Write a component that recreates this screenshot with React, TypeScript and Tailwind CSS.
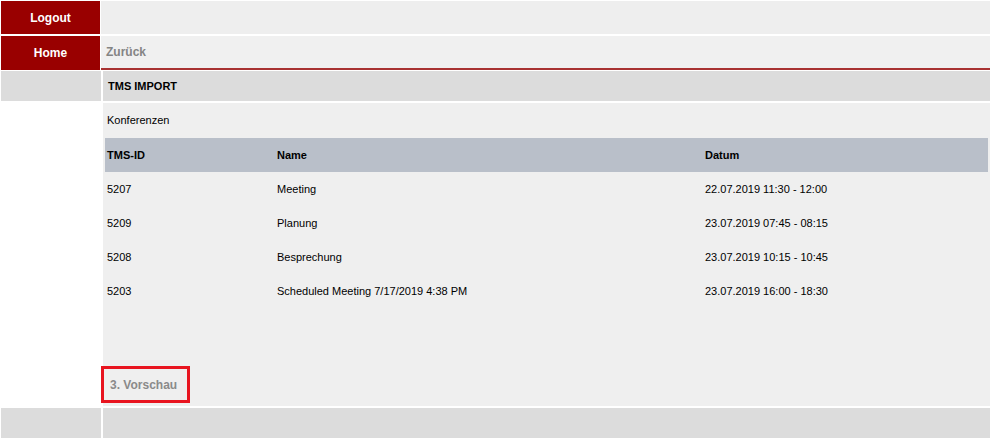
const rows = [
  { id: "5207", name: "Meeting", date: "22.07.2019 11:30 - 12:00" },
  { id: "5209", name: "Planung", date: "23.07.2019 07:45 - 08:15" },
  { id: "5208", name: "Besprechung", date: "23.07.2019 10:15 - 10:45" },
  { id: "5203", name: "Scheduled Meeting 7/17/2019 4:38 PM", date: "23.07.2019 16:00 - 18:30" },
];

export default function App() {
  return (
    <div className="h-[438px] w-full overflow-hidden bg-white px-px pt-px font-['Liberation_Sans',Arial,sans-serif]">
      {/* navigation */}
      <div className="grid grid-cols-[99px_1fr] gap-x-px gap-y-[2px]">
        <div className="flex h-[33px] items-center justify-center bg-[#990000] text-[12px] font-bold text-white">
          Logout
        </div>
        <div className="h-[33px] bg-[#eeeeee]" />
        <div className="flex h-[34px] items-center justify-center bg-[#990000] text-[12px] font-bold text-white">
          Home
        </div>
        <div className="flex h-[34px] items-center border-b-2 border-[#a83232] bg-[#f0f0f0] pb-[1px] pl-[5px] text-[12px] font-bold text-[#848484]">
          Zurück
        </div>
      </div>

      {/* main */}
      <div className="mt-px grid grid-cols-[100px_1fr] gap-x-[2px] gap-y-[2px]">
        <div className="h-[30px] bg-[#dcdcdc]" />
        <div className="flex h-[30px] items-center bg-[#dcdcdc] pl-[5px] text-[11px] font-bold text-black">
          TMS IMPORT
        </div>

        <div className="bg-white" />
        <div className="relative h-[303px] bg-[#efefef] px-[2px]">
          <div className="flex h-[35px] items-center pl-[2px] text-[11px] text-black">Konferenzen</div>
          <table className="w-full border-collapse text-left text-[11px] text-black">
            <thead>
              <tr className="h-[34px] bg-[#b9bfc9]">
                <th className="w-[170px] px-[2px] font-bold">TMS-ID</th>
                <th className="w-[428px] px-[2px] font-bold">Name</th>
                <th className="px-[2px] font-bold">Datum</th>
              </tr>
            </thead>
            <tbody>
              {rows.map((r) => (
                <tr key={r.id} className="h-[34px]">
                  <td className="px-[2px]">{r.id}</td>
                  <td className="px-[2px]">{r.name}</td>
                  <td className="px-[2px]">{r.date}</td>
                </tr>
              ))}
            </tbody>
          </table>
          <div className="absolute left-[7px] top-[273px] text-[12px] font-bold text-[#8a8a8a]">3. Vorschau</div>
          <div className="absolute left-[-2px] top-[263px] h-[37px] w-[89px] border-[3px] border-[#e8141f]" />
        </div>

        <div className="h-[31px] bg-[#dcdcdc]" />
        <div className="h-[31px] bg-[#dcdcdc]" />
      </div>
    </div>
  );
}
